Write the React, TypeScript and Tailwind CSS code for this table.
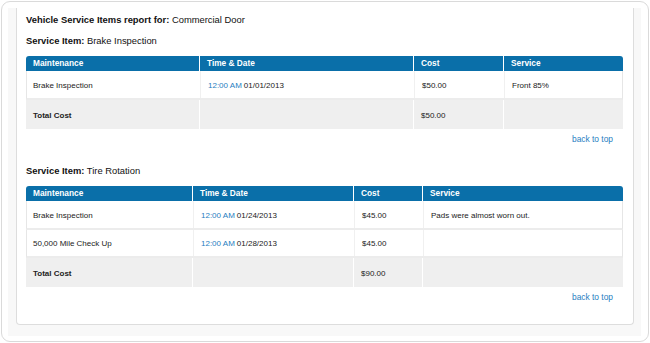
import React from "react";

type Row = { m: string; time: string; date: string; cost: string; service: string };

const link = "text-[#1f7ec1]";

function Table({ cols, rows, total, heights }: { cols: string; rows: Row[]; total: string; heights: string[] }) {
  return (
    <div className="w-[597px] text-[8px] text-[#222]">
      <div className={`grid ${cols} h-[15px] bg-[#0a6fa9] rounded-t-[3px] text-white font-bold text-[8.3px]`}>
        <div className="pl-[7px] flex items-center">Maintenance</div>
        <div className="pl-[7px] flex items-center border-l border-white">Time &amp; Date</div>
        <div className="pl-[7px] flex items-center border-l border-white">Cost</div>
        <div className="pl-[7px] flex items-center border-l border-white">Service</div>
      </div>
      {rows.map((r, i) => (
        <div
          key={i}
          className={`grid ${cols} ${heights[i]} bg-white border-x border-[#e6e6e6] border-b-2 border-b-[#ececec]`}
        >
          <div className="pl-[6px] pt-[2px] flex items-center">{r.m}</div>
          <div className="pl-[7px] pt-[2px] flex items-center border-l border-[#f0f0f0]">
            <span className={link}>{r.time}</span>
            <span className="ml-[2px]">{r.date}</span>
          </div>
          <div className="pl-[7px] pt-[2px] flex items-center border-l border-[#f0f0f0]">{r.cost}</div>
          <div className="pl-[7px] pt-[2px] flex items-center border-l border-[#f0f0f0]">{r.service}</div>
        </div>
      ))}
      <div className={`grid ${cols} h-[29px] bg-[#efefef] font-bold`}>
        <div className="pl-[7px] pt-[2px] flex items-center">Total Cost</div>
        <div className="border-l border-white"></div>
        <div className="pl-[7px] pt-[2px] flex items-center border-l border-white font-normal">{total}</div>
        <div className="border-l border-white"></div>
      </div>
    </div>
  );
}

export default function App() {
  return (
    <div
      className="w-[650px] h-[343px] bg-white pl-px pt-px"
      style={{ fontFamily: '"Liberation Sans", Arial, Helvetica, sans-serif' }}
    >
      <div className="w-[648px] h-[341px] border border-[#dadada] rounded-[9px] pt-[6px] pl-[6px] pr-[7px] pb-[5px]">
        <div className="h-full bg-[#f8f8f8] pl-[8px] pr-[7px] pb-[11px]">
          <div className="h-full bg-white border-x border-b border-[#dddddd] rounded-b-[4px] pl-[9px] pt-[6px]">
            <div className="h-[12px] leading-[12px] text-[9.4px] text-[#111]">
              <span className="font-bold">Vehicle Service Items report for:</span> Commercial Door
            </div>
            <div className="mt-[9px] h-[12px] leading-[12px] text-[9.4px] text-[#111]">
              <span className="font-bold">Service Item:</span> Brake Inspection
            </div>
            <div className="mt-[9px]">
              <Table
                cols="grid-cols-[173px_214px_90px_120px]"
                heights={["h-[29px]"]}
                rows={[{ m: "Brake Inspection", time: "12:00 AM", date: "01/01/2013", cost: "$50.00", service: "Front 85%" }]}
                total="$50.00"
              />
            </div>
            <div className="w-[597px] mt-[4px] h-[12px] leading-[12px] text-[8.4px] text-right pr-[10px]">
              <span className={link}>back to top</span>
            </div>
            <div className="mt-[20px] h-[12px] leading-[12px] text-[9.4px] text-[#111]">
              <span className="font-bold">Service Item:</span> Tire Rotation
            </div>
            <div className="mt-[9px]">
              <Table
                cols="grid-cols-[166px_161px_69px_201px]"
                heights={["h-[29px]", "h-[28px]"]}
                rows={[
                  { m: "Brake Inspection", time: "12:00 AM", date: "01/24/2013", cost: "$45.00", service: "Pads were almost worn out." },
                  { m: "50,000 Mile Check Up", time: "12:00 AM", date: "01/28/2013", cost: "$45.00", service: "" },
                ]}
                total="$90.00"
              />
            </div>
            <div className="w-[597px] mt-[4px] h-[12px] leading-[12px] text-[8.4px] text-right pr-[10px]">
              <span className={link}>back to top</span>
            </div>
          </div>
        </div>
      </div>
    </div>
  );
}
